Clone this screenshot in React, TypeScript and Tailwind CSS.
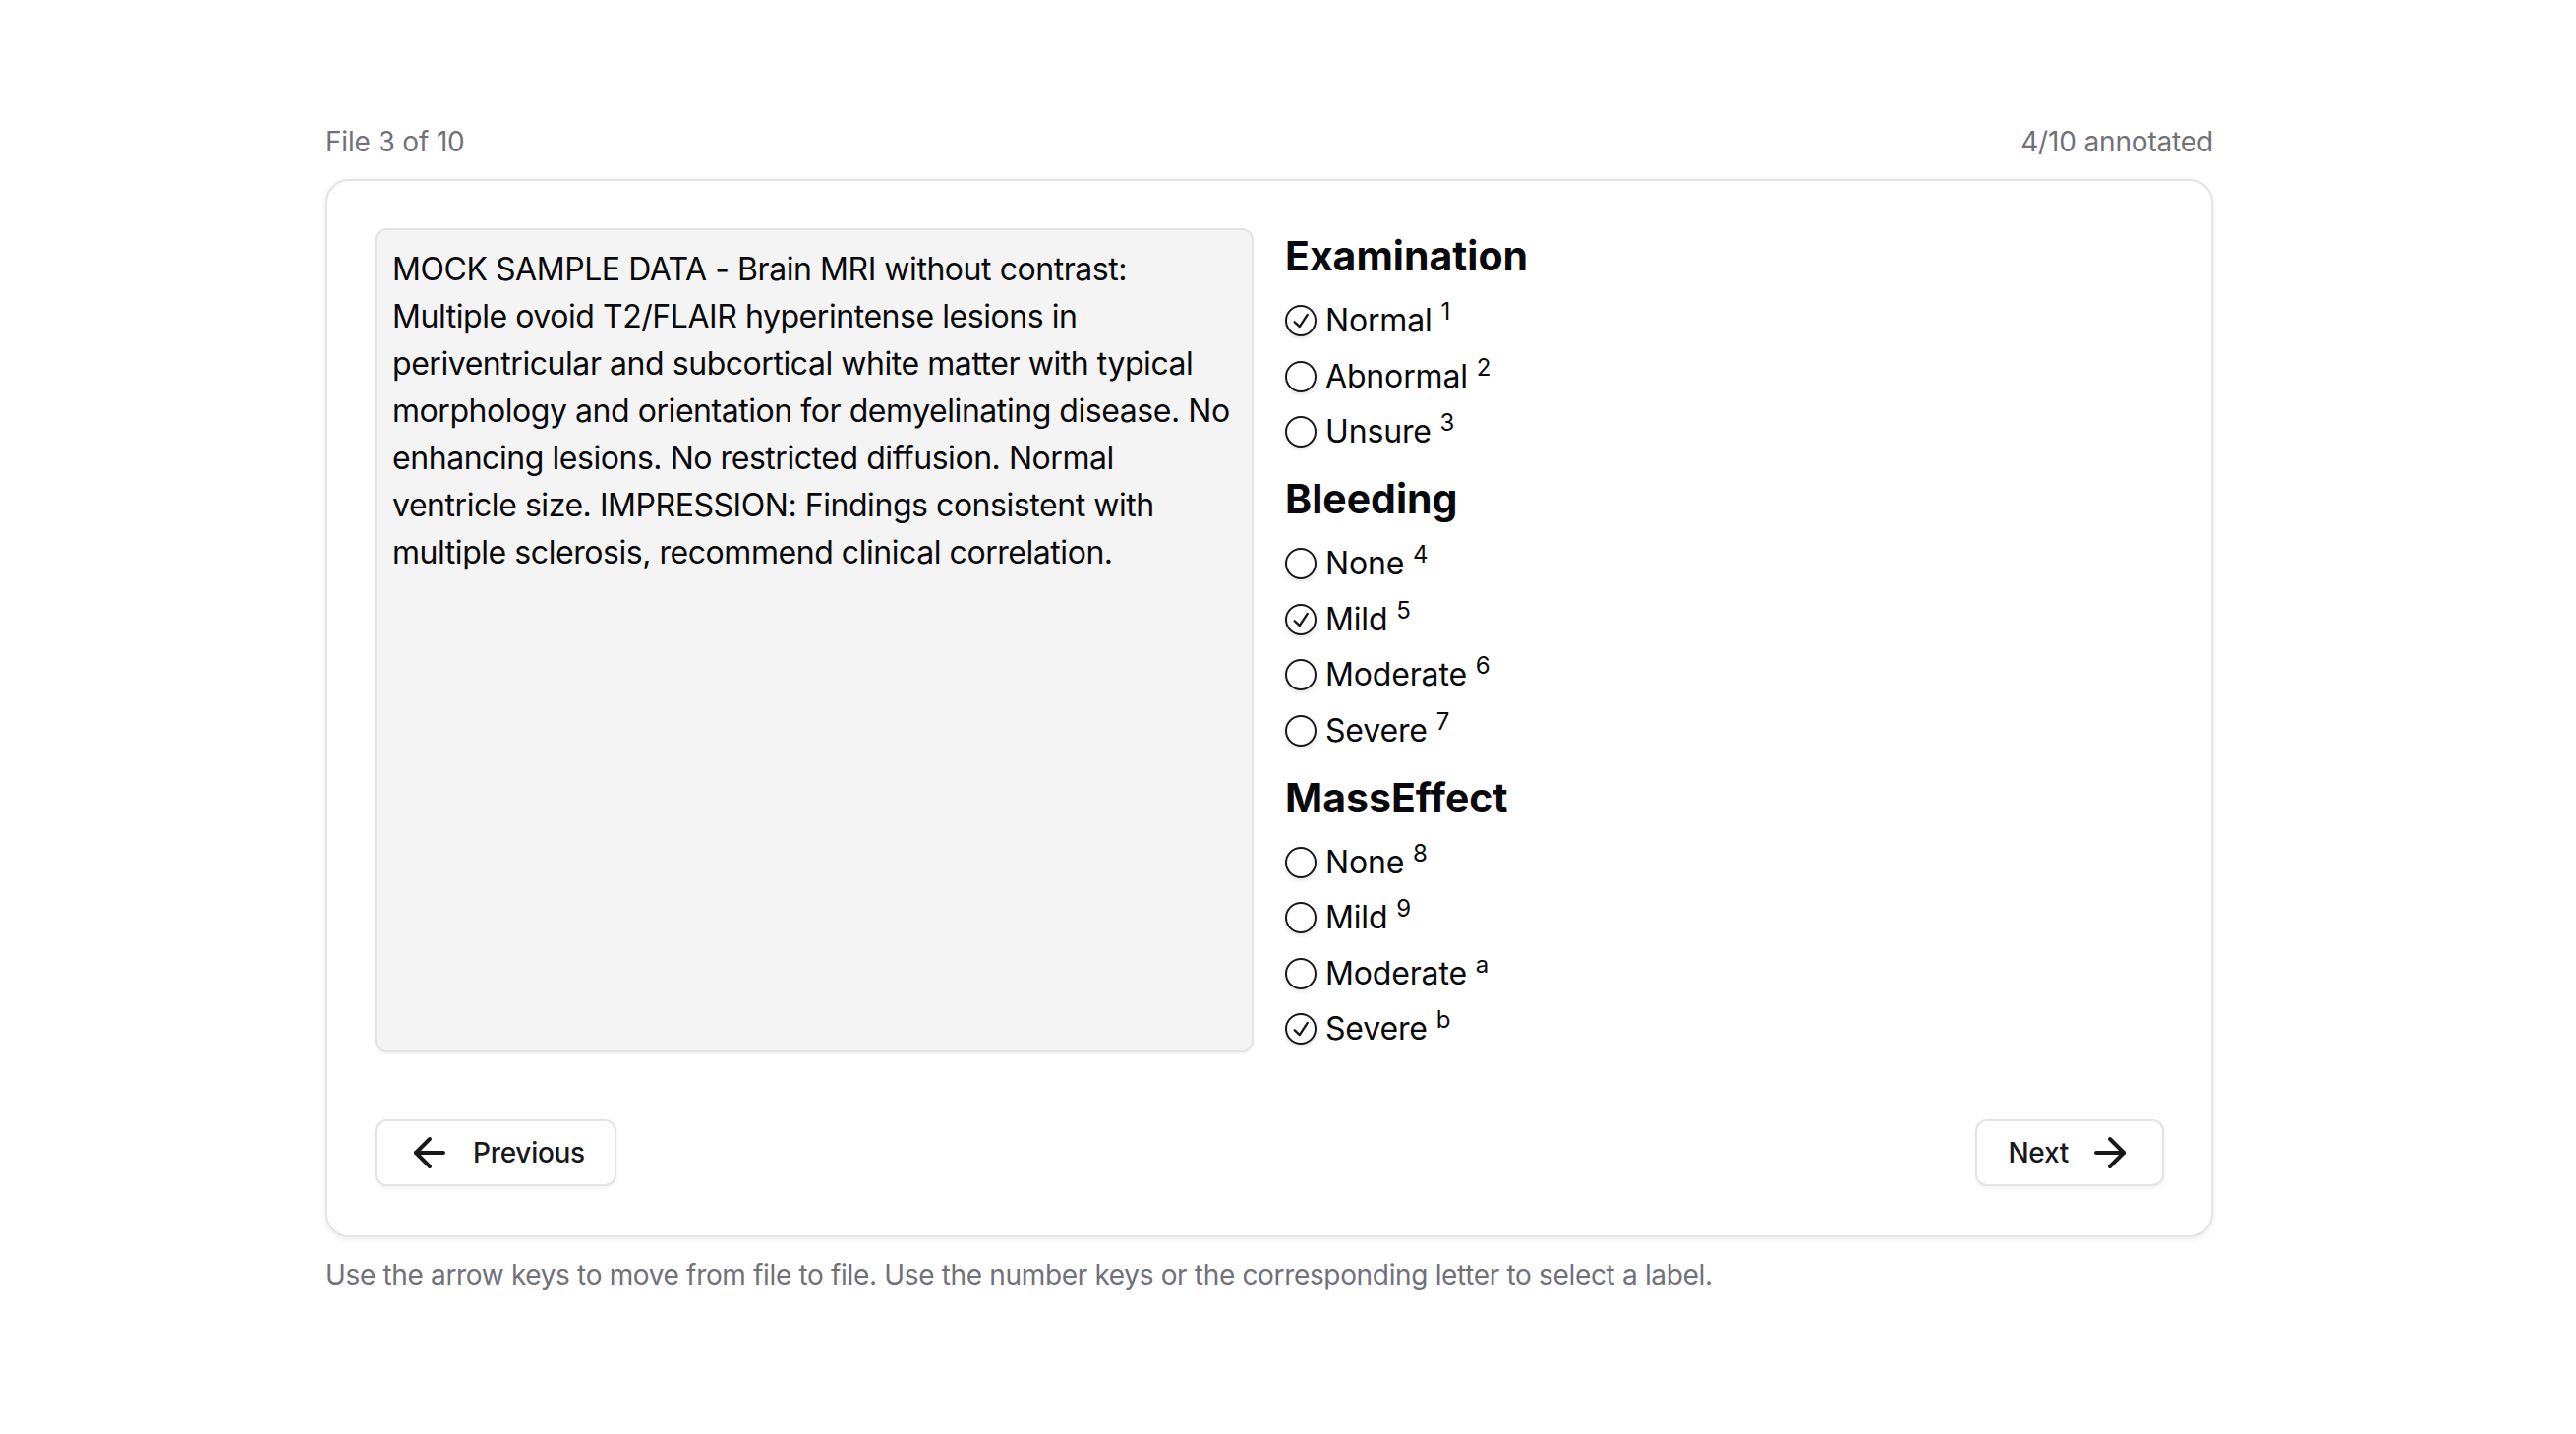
import React from "react";

type Opt = { label: string; key: string; checked?: boolean };
type Group = { title: string; options: Opt[] };

const groups: Group[] = [
  {
    title: "Examination",
    options: [
      { label: "Normal", key: "1", checked: true },
      { label: "Abnormal", key: "2" },
      { label: "Unsure", key: "3" },
    ],
  },
  {
    title: "Bleeding",
    options: [
      { label: "None", key: "4" },
      { label: "Mild", key: "5", checked: true },
      { label: "Moderate", key: "6" },
      { label: "Severe", key: "7" },
    ],
  },
  {
    title: "MassEffect",
    options: [
      { label: "None", key: "8" },
      { label: "Mild", key: "9" },
      { label: "Moderate", key: "a" },
      { label: "Severe", key: "b", checked: true },
    ],
  },
];

function Radio({ checked }: { checked?: boolean }) {
  return (
    <span className="flex h-[32px] w-[32px] shrink-0 items-center justify-center rounded-full border-2 border-[#18181b] shadow-[0_2px_4px_rgba(0,0,0,0.12)]">
      {checked && (
        <svg width="28" height="28" viewBox="0 0 15 15" fill="none">
          <path
            d="M11.4669 3.72684C11.7558 3.91574 11.8369 4.30308 11.648 4.59198L7.39799 11.092C7.29783 11.2452 7.13556 11.3467 6.95402 11.3699C6.77247 11.3931 6.58989 11.3355 6.45446 11.2124L3.70446 8.71241C3.44905 8.48022 3.43023 8.08494 3.66242 7.82953C3.89461 7.57412 4.28989 7.55529 4.5453 7.78749L6.75292 9.79441L10.6018 3.90792C10.7907 3.61902 11.178 3.53795 11.4669 3.72684Z"
            fill="#18181b"
            fillRule="evenodd"
            clipRule="evenodd"
          />
        </svg>
      )}
    </span>
  );
}

function ArrowLeft() {
  return (
    <svg width="48" height="48" viewBox="0 0 24 24" fill="none" stroke="#18181b" strokeWidth="2" strokeLinecap="round" strokeLinejoin="round">
      <path d="m12 19-7-7 7-7" />
      <path d="M19 12H5" />
    </svg>
  );
}

function ArrowRight() {
  return (
    <svg width="48" height="48" viewBox="0 0 24 24" fill="none" stroke="#18181b" strokeWidth="2" strokeLinecap="round" strokeLinejoin="round">
      <path d="M5 12h14" />
      <path d="m12 5 7 7-7 7" />
    </svg>
  );
}

export default function App() {
  return (
    <div className="min-h-screen bg-white tracking-[-0.01em] text-[#09090b]" style={{ fontFamily: "Inter, 'Liberation Sans', sans-serif" }}>
      <div className="ml-[331px] w-[1920px] pt-[124px]">
        <div className="mb-[18px] flex justify-between text-[28px] leading-[40px] text-[#71717a]">
          <span>File 3 of 10</span>
          <span>4/10 annotated</span>
        </div>
        <div className="rounded-[24px] border-2 border-[#e4e4e7] bg-white p-[48px] pb-[50px] shadow-[0_2px_6px_rgba(0,0,0,0.08)]">
          <div className="grid grid-cols-2 gap-[32px]">
            <div className="rounded-[12px] border-2 border-[#e4e4e7] bg-[#f4f4f5] px-[16px] py-[16px] text-[32px] leading-[48px] tracking-[-0.014em] text-[#09090b] shadow-[0_2px_2px_rgba(0,0,0,0.05)]">
              MOCK SAMPLE DATA - Brain MRI without contrast: Multiple ovoid T2/FLAIR hyperintense lesions in periventricular and subcortical white matter with typical morphology and orientation for demyelinating disease. No enhancing lesions. No restricted diffusion. Normal ventricle size. IMPRESSION: Findings consistent with multiple sclerosis, recommend clinical correlation.
            </div>
            <div className="flex flex-col">
              {groups.map((g, gi) => (
                <div key={g.title} className={gi === 0 ? "" : "mt-[16px]"}>
                  <h2 className="mb-[14px] text-[41px] font-bold leading-[56px] tracking-normal text-[#09090b]">{g.title}</h2>
                  <div className="flex flex-col gap-[8.5px]">
                    {g.options.map((o) => (
                      <div key={o.key} className="flex h-[48px] items-center gap-[9px]">
                        <Radio checked={o.checked} />
                        <span className="text-[32px] leading-[48px] text-[#09090b]">
                          {o.label} <sup>{o.key}</sup>
                        </span>
                      </div>
                    ))}
                  </div>
                </div>
              ))}
            </div>
          </div>
          <div className="mt-[68px] flex justify-between">
            <button className="flex h-[68px] items-center gap-[20px] rounded-[12px] border-2 border-[#e4e4e7] bg-white px-[30px] text-[28px] font-medium tracking-[-0.01em] text-[#18181b] shadow-[0_2px_4px_rgba(0,0,0,0.06)]">
              <ArrowLeft />
              <span>Previous</span>
            </button>
            <button className="flex h-[68px] items-center gap-[18px] rounded-[12px] border-2 border-[#e4e4e7] bg-white pl-[31px] pr-[29px] text-[28px] font-medium tracking-[-0.01em] text-[#18181b] shadow-[0_2px_4px_rgba(0,0,0,0.06)]">
              <span>Next</span>
              <ArrowRight />
            </button>
          </div>
        </div>
        <div className="mt-[18px] text-[28px] leading-[40px] tracking-[-0.012em] text-[#71717a]">
          Use the arrow keys to move from file to file. Use the number keys or the corresponding letter to select a label.
        </div>
      </div>
    </div>
  );
}
